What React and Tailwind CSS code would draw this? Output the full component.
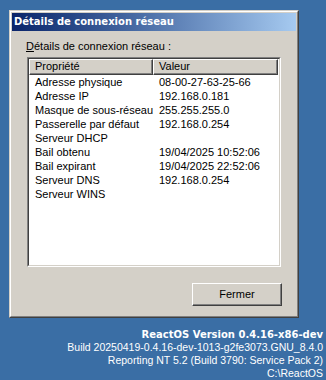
const rows = [
  ['Adresse physique', '08-00-27-63-25-66'],
  ['Adresse IP', '192.168.0.181'],
  ['Masque de sous-réseau', '255.255.255.0'],
  ['Passerelle par défaut', '192.168.0.254'],
  ['Serveur DHCP', ''],
  ['Bail obtenu', '19/04/2025 10:52:06'],
  ['Bail expirant', '19/04/2025 22:52:06'],
  ['Serveur DNS', '192.168.0.254'],
  ['Serveur WINS', ''],
]

export default function App() {
  return (
    <div className="w-[326px] h-[380px] bg-[#3A6EA5] flex flex-col pt-[10px] font-['Liberation_Sans',Arial,sans-serif] text-[11px] text-black overflow-hidden">
      {/* fenêtre */}
      <div className="ml-[9px] w-[290px] h-[308px] border border-t-[#D4D0C8] border-l-[#D4D0C8] border-r-[#404040] border-b-[#404040]">
        <div className="h-full border border-t-white border-l-white border-r-[#808080] border-b-[#808080] bg-[#D4D0C8] p-px flex flex-col">
          <div className="h-[18px] bg-gradient-to-r from-[#0A246A] to-[#A6CAF0] flex items-center pl-[2px]">
            <span className="font-['DejaVu_Sans',Verdana,sans-serif] font-bold text-[10px] text-white leading-none">
              Détails de connexion réseau
            </span>
          </div>

          <div className="flex flex-col pl-[14px] pt-[9px]">
            <div className="leading-[13px] h-[13px]">
              <span className="underline">D</span>étails de connexion réseau :
            </div>

            {/* liste */}
            <div className="mt-[4px] ml-px w-[254px] h-[210px] border border-t-[#808080] border-l-[#808080] border-b-white border-r-white">
              <div className="h-full border border-t-[#404040] border-l-[#404040] border-b-[#D4D0C8] border-r-[#D4D0C8] bg-white">
                <div className="flex">
                  <div className="w-[124px] h-[16px] bg-[#D4D0C8] border border-t-white border-l-white border-r-[#404040] border-b-[#404040] shadow-[inset_-1px_-1px_#808080] pl-[5px] leading-[13px]">
                    Propriété
                  </div>
                  <div className="w-[125px] h-[16px] bg-[#D4D0C8] border border-t-white border-l-white border-r-[#404040] border-b-[#404040] shadow-[inset_-1px_-1px_#808080] pl-[5px] leading-[13px]">
                    Valeur
                  </div>
                </div>
                {rows.map(([k, v]) => (
                  <div key={k} className="flex h-[14px] leading-[14px]">
                    <div className="w-[124px] pl-[6px] whitespace-nowrap">{k}</div>
                    <div className="pl-[6px] whitespace-nowrap">{v}</div>
                  </div>
                ))}
              </div>
            </div>
          </div>

          <div className="flex justify-end pr-[14px] mt-[16px]">
            <div className="w-[90px] h-[23px] border border-t-white border-l-white border-r-[#404040] border-b-[#404040] shadow-[inset_-1px_-1px_#808080] flex items-center justify-center">
              Fermer
            </div>
          </div>
        </div>
      </div>

      {/* infos de version */}
      <div className="flex flex-col items-end pr-[3px] mt-[10px] text-white text-[10.5px] leading-[13px] whitespace-nowrap">
        <div className="font-['DejaVu_Sans',Verdana,sans-serif] font-bold text-[10px]">ReactOS Version 0.4.16-x86-dev</div>
        <div>Build 20250419-0.4.16-dev-1013-g2fe3073.GNU_8.4.0</div>
        <div>Reporting NT 5.2 (Build 3790: Service Pack 2)</div>
        <div>C:\ReactOS</div>
      </div>
    </div>
  )
}
